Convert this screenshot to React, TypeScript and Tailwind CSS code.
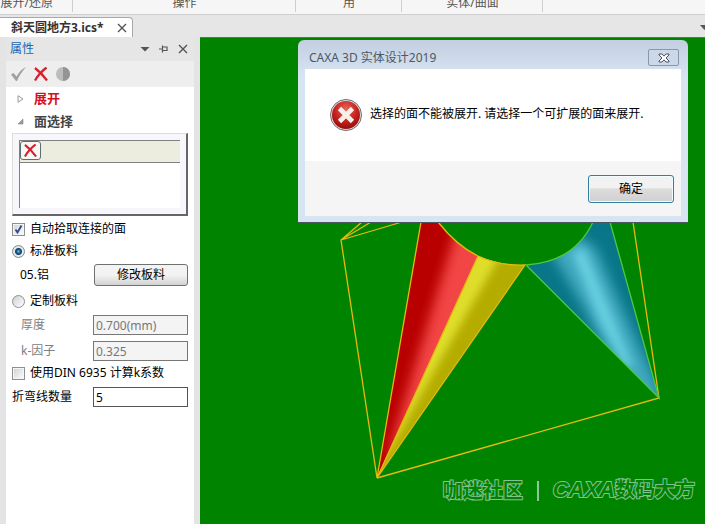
import clsx from "clsx";
import { useState } from "react";
import type { ReactNode } from "react";

const ribbonGroups = [
	{ name: "展开/还原", width: "w-[73px]", pad: "justify-end pr-5" },
	{ name: "操作", width: "w-[223px]", pad: "justify-center" },
	{ name: "用", width: "w-[106px]", pad: "justify-center" },
	{ name: "实体/曲面", width: "w-[141px]", pad: "justify-center" },
];

function Ribbon() {
	return (
		<div className="flex h-[15px] overflow-hidden border-b border-[#cfcfcf] bg-[#f6f6f6]">
			{ribbonGroups.map((group) => (
				<div
					key={group.name}
					className={clsx("flex shrink-0 items-end pb-[5px]", group.width, group.pad)}
				>
					<span className="whitespace-nowrap text-xs leading-3 text-[#555]">
						{group.name}
					</span>
				</div>
			))}
		</div>
	);
}

function RibbonDividers() {
	return (
		<div className="absolute left-0 top-0 flex h-3">
			{ribbonGroups.map((group) => (
				<div
					key={group.name}
					className={clsx("border-r border-[#cfcfcf]", group.width)}
				/>
			))}
		</div>
	);
}

function CloseIcon() {
	return (
		<svg viewBox="0 0 10 10" className="size-[10px]" fill="none">
			<path d="M1 1l8 8M9 1l-8 8" stroke="#555" strokeWidth="1.4" />
		</svg>
	);
}

function RedCross({ className }: { className: string }) {
	return (
		<svg viewBox="0 0 14 14" className={className} fill="none">
			<path d="M1 1C5 4 9 8 13 13.500" stroke="#d8202c" strokeWidth="2.3" />
			<path d="M12.500 .5C8 4 4 8 1 13.500" stroke="#d8202c" strokeWidth="2.3" />
		</svg>
	);
}

function TabBar() {
	return (
		<div className="flex h-[22px] items-end justify-between bg-[#e6e6e6]">
			<div className="flex h-5 w-[133px] items-center justify-between rounded-tr border border-b-0 border-l-0 border-[#a8a8a8] bg-white pl-[11px] pr-[5px]">
				<span className="whitespace-nowrap text-xs font-bold text-[#333]">
					斜天圆地方3.ics*
				</span>
				<button type="button" aria-label="关闭文档">
					<CloseIcon />
				</button>
			</div>
			<svg viewBox="0 0 5 22" className="h-[22px] w-[5px]">
				<path d="M0 10h9l-4.500 5z" fill="#555" />
			</svg>
		</div>
	);
}

function PanelHeader() {
	return (
		<div className="flex h-6 items-center justify-between bg-[#e6e6e6] pl-1 pr-1.5">
			<h2 className="text-xs text-[#1a66b8]">属性</h2>
			<div className="flex items-center gap-[9px]">
				<button type="button" aria-label="菜单">
					<svg viewBox="0 0 10 10" className="size-[10px]">
						<path d="M.5 3h9L5 7.500z" fill="#555" />
					</svg>
				</button>
				<button type="button" aria-label="固定">
					<svg viewBox="0 0 10 10" className="size-[10px]" fill="none">
						<path
							d="M0 5h3M3.500 1.500v7M3.500 3h4.500v4M3.500 6.500h5"
							stroke="#555"
							strokeWidth="1.2"
						/>
					</svg>
				</button>
				<button type="button" aria-label="关闭">
					<CloseIcon />
				</button>
			</div>
		</div>
	);
}

function PanelToolbar() {
	return (
		<div className="flex h-[26px] items-center gap-2 bg-[#eee] pl-[5px]">
			<button type="button" aria-label="应用">
				<svg viewBox="0 0 15 14" className="h-3.5 w-[15px]">
					<path d="M0 7.500L2.500 6l3 3.500C8 5 11 2 15 0 11 4.500 8 9 6 14H5z" fill="#a0a0a0" />
				</svg>
			</button>
			<button type="button" aria-label="取消">
				<RedCross className="size-3.5" />
			</button>
			<button type="button" aria-label="预览">
				<svg viewBox="0 0 14 14" className="size-3.5">
					<circle cx="7" cy="7" r="7" fill="#bcbcbc" />
					<path d="M7 0a7 7 0 0 1 0 14z" fill="#949494" />
				</svg>
			</button>
		</div>
	);
}

function Section({
	title,
	open,
	className,
}: {
	title: string;
	open?: boolean;
	className: string;
}) {
	return (
		<button
			type="button"
			aria-expanded={!!open}
			className={clsx(
				"flex h-[23px] w-full items-center gap-2.5 pl-[11px] text-[13px] font-bold",
				className,
			)}
		>
			<svg viewBox="0 0 7 8" className="h-2 w-[7px]">
				{open ? (
					<path d="M6 1v5H1z" fill="#999" stroke="#888" strokeWidth=".6" />
				) : (
					<path d="M1 .7v6.600L6 4z" fill="#fff" stroke="#999" />
				)}
			</svg>
			{title}
		</button>
	);
}

const tickBox =
	"grid size-[13px] shrink-0 place-items-center border border-[#8e8f8f] bg-linear-to-br from-[#cdd0d4] to-white shadow-[inset_0_0_0_1px_#f6f6f6]";

function TickBox({
	label,
	defaultChecked,
}: {
	label: string;
	defaultChecked?: boolean;
}) {
	return (
		<label className="flex items-center gap-[5px] whitespace-nowrap">
			<span className={tickBox}>
				<input
					type="checkbox"
					defaultChecked={defaultChecked}
					className="peer col-start-1 row-start-1 size-[11px] appearance-none"
				/>
				<svg
					viewBox="0 0 11 11"
					fill="none"
					className="pointer-events-none invisible col-start-1 row-start-1 size-[11px] peer-checked:visible"
				>
					<path d="M2.500 5.500L4.500 8.500 8.500 1.500" stroke="#31478f" strokeWidth="1.8" />
				</svg>
			</span>
			{label}
		</label>
	);
}

function Radio({
	label,
	checked,
	onChange,
}: {
	label: string;
	checked: boolean;
	onChange: () => void;
}) {
	return (
		<label className="flex items-center gap-[5px]">
			<input
				type="radio"
				name="sheet"
				checked={checked}
				onChange={onChange}
				className={clsx(
					"size-[13px] shrink-0 appearance-none rounded-full border",
					checked
						? "border-[#7d8a94] bg-[radial-gradient(circle,#5cc4ee_0px,#1c5a8a_2px,#153f66_3px,#e4e9ec_4px)]"
						: "border-[#8e8f8f] bg-linear-to-br from-[#cdd0d4] to-white",
				)}
			/>
			{label}
		</label>
	);
}

function Field({
	label,
	id,
	value,
	disabled,
}: {
	label: string;
	id: string;
	value: string;
	disabled?: boolean;
}) {
	return (
		<div className="flex items-center">
			<label
				htmlFor={id}
				className={clsx(
					"w-[81px] shrink-0",
					disabled && "pl-[9px] text-[#808080]",
				)}
			>
				{label}
			</label>
			<input
				id={id}
				defaultValue={value}
				disabled={disabled}
				className="h-5 w-full min-w-0 border border-[#555] bg-white px-0.5 disabled:border-[#777] disabled:bg-[#f4f4f4] disabled:text-[#777]"
			/>
		</div>
	);
}

function Row({ children }: { children: ReactNode }) {
	return <div className="flex h-6 flex-col justify-center">{children}</div>;
}

function PropertyPanel() {
	const [sheet, setSheet] = useState<"standard" | "custom">("standard");

	return (
		<aside className="flex w-[200px] shrink-0 flex-col bg-[#e4e4e4] pl-1.5 pr-1.5">
			<PanelHeader />
			<PanelToolbar />
			<div className="flex-1 bg-white pb-4 text-xs text-black">
				<Section title="展开" className="text-[#d4101c]" />
				<Section title="面选择" open className="text-[#444]" />

				<div className="px-1.5">
					<div className="border-b-2 border-l border-r-2 border-t border-b-[#666] border-l-[#ddd] border-r-[#666] border-t-[#ddd] bg-[#f6f6fb] p-1.5">
						<div className="h-[22px] border-l border-t border-[#808080] bg-[#ecedde]">
							<button
								type="button"
								aria-label="删除"
								className="grid h-[19px] w-[21px] place-items-center rounded-[3px] border border-[#5f6f6f] bg-[#f7f7f5]"
							>
								<RedCross className="size-[13px]" />
							</button>
						</div>
						<div className="h-[46px] border-l border-t border-[#808080] bg-white" />
					</div>

					<div className="flex flex-col pt-px">
						<Row>
							<TickBox label="自动拾取连接的面" defaultChecked />
						</Row>
						<div className="flex h-5 items-center">
							<Radio
								label="标准板料"
								checked={sheet === "standard"}
								onChange={() => setSheet("standard")}
							/>
						</div>
						<div className="flex h-7 items-center">
							<span className="w-[82px] shrink-0 pl-2">05.铝</span>
							<button
								type="button"
								className="h-[22px] flex-1 rounded-[3px] border border-[#707070] bg-linear-to-b from-[#f3f3f3] from-50% to-[#d2d2d2] leading-none"
							>
								修改板料
							</button>
						</div>
						<Row>
							<Radio
								label="定制板料"
								checked={sheet === "custom"}
								onChange={() => setSheet("custom")}
							/>
						</Row>
						<Row>
							<Field
								id="thickness"
								label="厚度"
								value="0.700(mm)"
								disabled={sheet === "standard"}
							/>
						</Row>
						<div className="pt-1">
							<Field
								id="kfactor"
								label="k-因子"
								value="0.325"
								disabled={sheet === "standard"}
							/>
						</div>
						<Row>
							<TickBox label="使用DIN 6935 计算k系数" />
						</Row>
						<Row>
							<Field id="bends" label="折弯线数量" value="5" />
						</Row>
					</div>
				</div>
			</div>
		</aside>
	);
}

function Model() {
	return (
		<svg viewBox="0 0 505 486" className="h-[486px] w-[505px]" fill="none">
			<defs>
				<clipPath id="red">
					<path d="M221 184h17Q257 208 278 218L177 440z" />
				</clipPath>
				<clipPath id="yellow">
					<path d="M278 218Q300 227 325 227L177 440z" />
				</clipPath>
				<clipPath id="blue">
					<path d="M326 227Q374 224 393 184h17L459 360z" />
				</clipPath>
				<filter id="soft" x="-50%" y="-50%" width="200%" height="200%">
					<feGaussianBlur stdDeviation="6" />
				</filter>
				<filter id="softer" x="-50%" y="-50%" width="200%" height="200%">
					<feGaussianBlur stdDeviation="4" />
				</filter>
			</defs>

			<g clipPath="url(#red)">
				<path d="M170 170h120v280H170z" fill="#b80000" />
				<path d="M258 186L310 200 205 400 186 424z" fill="#f24444" filter="url(#soft)" />
			</g>
			<g clipPath="url(#yellow)">
				<path d="M170 200h170v250H170z" fill="#b5ac00" />
				<path d="M268 200L302 214 196 400 170 440z" fill="#dede2c" filter="url(#softer)" />
			</g>
			<g clipPath="url(#blue)">
				<path d="M320 180h150v190H320z" fill="#087688" />
				<path d="M350 212L378 198 396 210 422 270 452 336 470 380 440 362 408 318 384 270z" fill="#3fa9bf" filter="url(#soft)" />
				<path d="M372 214L384 210 410 272 434 330 424 328 400 284z" fill="#66cfe0" filter="url(#softer)" />
			</g>

			<g stroke="#e8b812" strokeWidth="1.3">
				<path d="M238 184Q257 208 278 218T325 227L177 440 278 218" />
				<path d="M221 184L177 440 141 202 162 184M141 202L171 184M141 202L202 184" />
				<path d="M433 184L459 360 177 440" />
			</g>
			<path
				d="M393 184Q374 224 326 227L459 360 410 184"
				stroke="#4fc83c"
				strokeWidth="1.3"
			/>
		</svg>
	);
}

function ErrorDialog() {
	return (
		<div
			role="alertdialog"
			aria-labelledby="dialog-title"
			aria-describedby="dialog-text"
			className="absolute left-[98px] top-0.5 w-[390px] rounded-t-md border-b border-[#4b5560] bg-linear-to-b from-[#c3cfe1] to-[#d7e4f2] to-20% px-[7px] pb-1.5"
		>
			<div className="flex h-[29px] items-center justify-between pl-1 pr-0.5 pt-1.5">
				<h1 id="dialog-title" className="text-xs text-[#4c5866]">
					CAXA 3D 实体设计2019
				</h1>
				<button
					type="button"
					aria-label="关闭"
					className="grid h-[17px] w-[31px] place-items-center rounded-[2px] border border-[#8896ae] bg-[#cbd8e8]"
				>
					<svg viewBox="0 0 12 10" className="h-2.5 w-3">
						<path
							d="M1 1h3l2 2.200L8 1h3v1L8 5l3 3v1H8L6 6.800 4 9H1V8l3-3-3-3z"
							fill="#fff"
							stroke="#4b5260"
						/>
					</svg>
				</button>
			</div>
			<div className="flex h-[92px] items-center gap-2 bg-white pl-[25px]">
				<svg viewBox="0 0 32 32" className="size-8 shrink-0">
					<defs>
						<radialGradient id="ball" cx="50%" cy="30%" r="65%">
							<stop offset="0" stopColor="#e8675e" />
							<stop offset=".6" stopColor="#c92420" />
							<stop offset="1" stopColor="#9e1010" />
						</radialGradient>
					</defs>
					<circle cx="16" cy="16" r="15.500" fill="#e6dede" stroke="#6d6d6d" />
					<circle cx="16" cy="16" r="14" fill="url(#ball)" />
					<path
						d="M9.500 9.500l13 13M22.500 9.500l-13 13"
						stroke="#f7efe9"
						strokeWidth="4.600"
					/>
				</svg>
				<p id="dialog-text" className="whitespace-nowrap pb-0.5 text-xs text-black">
					选择的面不能被展开. 请选择一个可扩展的面来展开.
				</p>
			</div>
			<div className="flex h-[55px] items-center justify-end bg-[#f5f5f6] pr-[7px]">
				<button
					type="button"
					className="h-7 w-[86px] rounded-[3px] border border-[#2f7fa0] bg-linear-to-b from-[#f2f2f2] from-45% via-[#dcdcdc] via-50% to-[#d0d0d0] text-xs text-black shadow-[inset_0_0_0_1px_#f4fbff]"
				>
					确定
				</button>
			</div>
		</div>
	);
}

export default function App() {
	return (
		<div className="relative flex min-h-screen flex-col overflow-hidden bg-[#e6e6e6] font-['Noto_Sans','Noto_Sans_CJK_SC',sans-serif]">
			<Ribbon />
			<RibbonDividers />
			<TabBar />
			<div className="flex flex-1">
				<PropertyPanel />
				<main className="relative min-w-0 flex-1 overflow-hidden border-t border-[#5c6e5c] bg-[#008400]">
					<Model />
					<ErrorDialog />
					<p className="absolute bottom-[18px] right-2.5 flex items-center gap-3.5 whitespace-nowrap text-xl font-bold text-[#008400] [-webkit-text-stroke:2px_#84c092] [paint-order:stroke]">
						<span>咖迷社区</span>
						<span className="h-5 w-0.5 bg-[#8cc79a]" />
						<span>
							<em className="font-['Liberation_Sans',sans-serif] text-[22px]">
								CAXA
							</em>
							数码大方
						</span>
					</p>
				</main>
			</div>
		</div>
	);
}
